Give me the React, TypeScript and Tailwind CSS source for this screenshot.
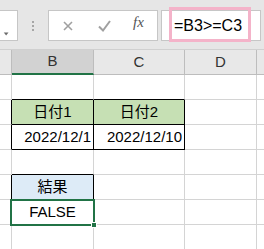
import React from "react";

const G = "#d4d4d4";
const K = "#000000";

type Cell = { text?: string; bg?: string; r?: string; b?: string; align?: "center" | "right" };

const widths = [12, 82, 91, 72, 20];

function Row({ cells }: { cells: Cell[] }) {
  return (
    <div className="flex h-[25px]">
      {cells.map((c, i) => (
        <div
          key={i}
          className={`shrink-0 h-full border-r border-b flex items-center overflow-hidden whitespace-nowrap text-[15px] text-black ${c.align === "right" ? "justify-end pr-[2px]" : "justify-center"}`}
          style={{ width: widths[i], borderRightColor: c.r ?? G, borderBottomColor: c.b ?? G, background: c.bg ?? "#ffffff" }}
        >
          {c.text}
        </div>
      ))}
    </div>
  );
}

export default function App() {
  const green = "#c6e0b4";
  const blue = "#ddebf7";
  const rows: Cell[][] = [
    [{}, { b: K }, { b: K }, {}, {}],
    [{ r: K }, { text: "日付1", bg: green, r: K, b: K }, { text: "日付2", bg: green, r: K, b: K }, {}, {}],
    [{ r: K }, { text: "2022/12/1", r: K, b: K, align: "right" }, { text: "2022/12/10", r: K, b: K, align: "right" }, {}, {}],
    [{}, { b: K }, {}, {}, {}],
    [{ r: K }, { text: "結果", bg: blue, r: K, b: K }, {}, {}, {}],
    [{}, { text: "FALSE" }, {}, {}, {}],
    [{}, {}, {}, {}, {}],
  ];
  return (
    <div
      className="relative w-[264px] h-[249px] overflow-hidden bg-white"
      style={{ fontFamily: '"Liberation Sans", "Noto Sans CJK JP", sans-serif' }}
    >
      {/* toolbar */}
      <div className="h-[50px] bg-[#e6e6e6] border-b border-[#d0d0d0] flex items-start pt-[10px]">
        <div className="w-[18px] h-[31px] bg-white border-r border-y border-[#c6c6c6] flex items-center">
          <svg width="18" height="31" viewBox="0 0 18 31">
            <path d="M4 23 L9 23 L6.5 26 Z" fill="#6b6b6b" />
          </svg>
        </div>
        <div className="w-[30px] h-[31px] flex flex-col items-center justify-center gap-[2px]">
          <div className="w-[2px] h-[2px] bg-[#a6a6a6]" />
          <div className="w-[2px] h-[2px] bg-[#a6a6a6]" />
          <div className="w-[2px] h-[2px] bg-[#a6a6a6]" />
        </div>
        <div className="w-[110px] h-[31px] bg-white border border-[#c6c6c6] flex items-center">
          <svg width="108" height="29" viewBox="0 0 108 29" className="shrink-0">
            <path d="M15 11 L23 19 M23 11 L15 19" stroke="#a0a0a0" strokeWidth="1.6" fill="none" />
            <path d="M50 15.5 L54 19.5 L61 10" stroke="#a0a0a0" strokeWidth="2" fill="none" />
          </svg>
          <span
            className="absolute left-[133px] top-[15px] text-[15px] italic text-[#555] leading-none"
            style={{ fontFamily: '"Liberation Serif", serif' }}
          >
            fx
          </span>
        </div>
        <div className="w-[3px]" />
        <div className="w-[100px] h-[31px] bg-white border border-[#c6c6c6] flex items-center pl-[12px] text-[16px] text-black">
          =B3&gt;=C3
        </div>
      </div>
      {/* pink highlight */}
      <div className="absolute left-[169px] top-[7px] w-[82px] h-[35px] border-[3px] border-[#f4b3c9]" />
      {/* column header */}
      <div className="flex h-[25px] bg-[#e8e8e8]">
        {["", "B", "C", "D", ""].map((h, i) => (
          <div
            key={i}
            className={`shrink-0 h-full border-r border-[#bdbdbd] flex items-center justify-center text-[15px] text-[#333] ${i === 1 ? "bg-[#d2d2d2] border-b-2 border-b-[#217346]" : "border-b border-b-[#bdbdbd]"}`}
            style={{ width: widths[i] }}
          >
            {h}
          </div>
        ))}
      </div>
      {rows.map((r, i) => (
        <Row key={i} cells={r} />
      ))}
      {/* selection */}
      <div className="absolute left-[10px] top-[199px] w-[85px] h-[27px] border-2 border-[#217346]" />
      <div className="absolute left-[91px] top-[222px] w-[6px] h-[6px] bg-[#217346] border border-white" />
    </div>
  );
}
